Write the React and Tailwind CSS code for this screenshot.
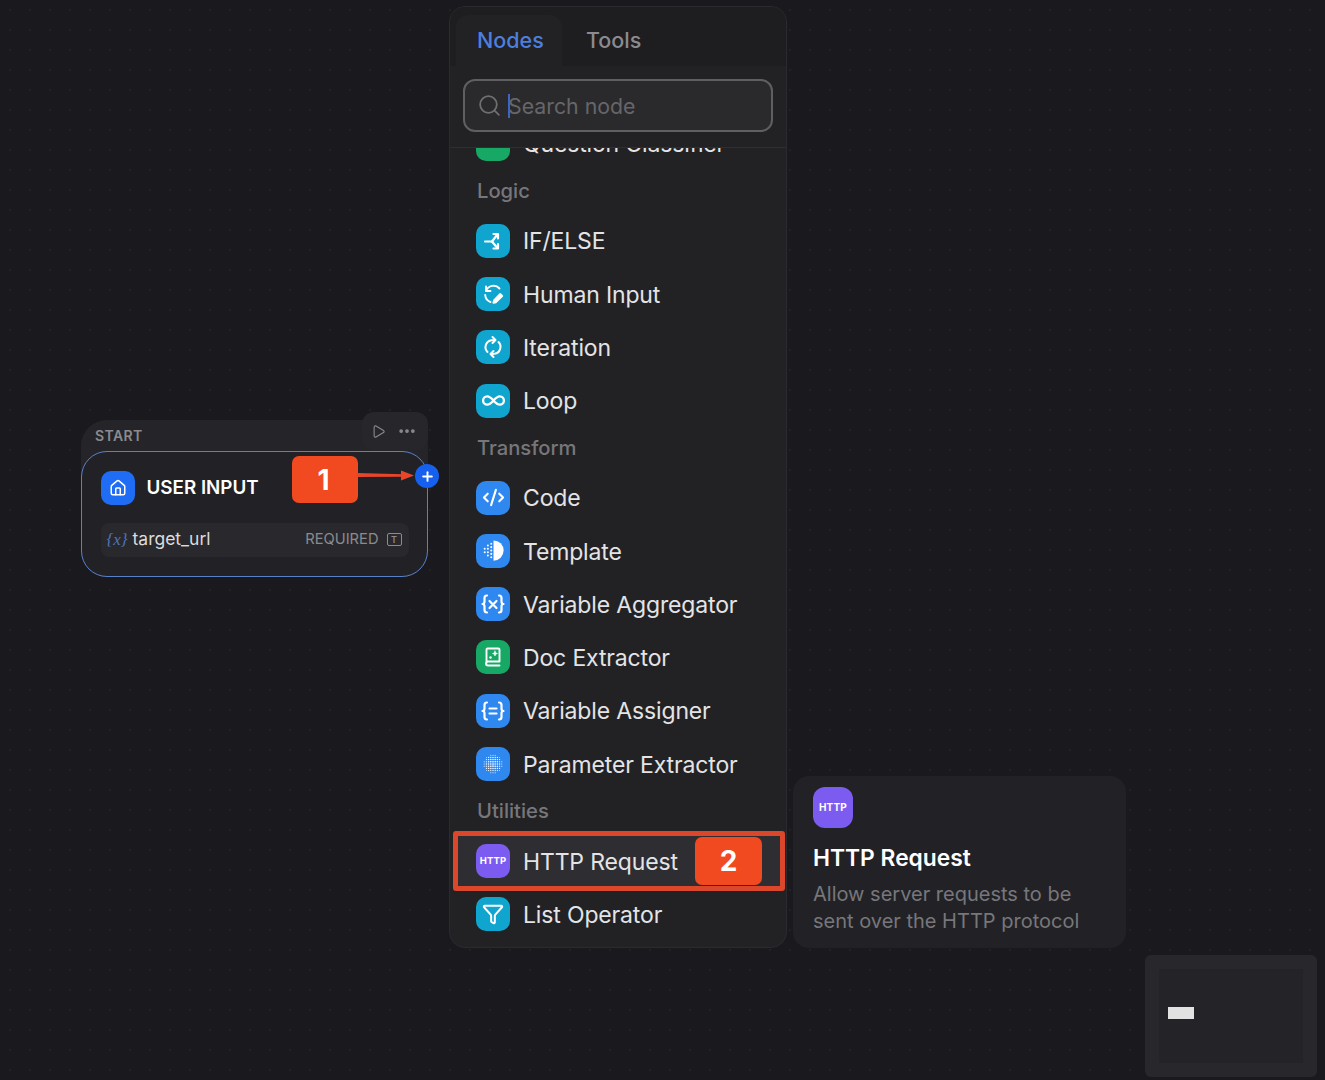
import React from 'react';
import { CodeXml, Ellipsis, Funnel, House, Infinity as InfinityIcon, Play, Plus, Search } from 'lucide-react';

const BLUE = 'bg-[#2f88f0]';
const CYAN = 'bg-[#0fa5cf]';
const GREEN = 'bg-[#17a865]';

function IfElseIcon() {
  return (
    <svg viewBox="0 0 24 24" className="w-6 h-6" fill="none" stroke="white" strokeWidth="2.2" strokeLinecap="round" strokeLinejoin="round">
      <path d="M4 12.5h7l5-6.5" />
      <path d="M11 12.5l5 6" />
      <path d="M12.5 5h4.5v4.5" />
      <path d="M17 15v4.5h-4.5" />
    </svg>
  );
}

function HumanIcon() {
  return (
    <svg viewBox="0 0 24 24" className="w-6 h-6" fill="none" stroke="white" strokeWidth="1.9" strokeLinecap="round" strokeLinejoin="round">
      <path d="M5 9a8 8 0 0 1 13.5-2.5" />
      <path d="M5 4.5V9h4.5" />
      <path d="M4.2 13a8 8 0 0 0 5.3 7" />
      <path d="M13 18.5l6.2-6.5 2 2-6.2 6.2-2.6.6z" fill="white" />
    </svg>
  );
}

function IterationIcon() {
  return (
    <svg viewBox="0 0 24 24" className="w-6 h-6" fill="none" stroke="white" strokeWidth="2" strokeLinecap="round" strokeLinejoin="round">
      <path d="M6.500 17a7 7 0 0 1 4-11.800L14 5" />
      <path d="M11.500 2l3 3-3 3" />
      <path d="M17.500 7a7 7 0 0 1-4 11.800L10 19" />
      <path d="M12.500 22l-3-3 3-3" />
    </svg>
  );
}

function TemplateIcon() {
  const dots = [
    [10, 6], [10, 9], [10, 12], [10, 15], [10, 18], [7, 7.500], [7, 10.500], [7, 13.500], [7, 16.500], [4.200, 10.500], [4.200, 13.500],
  ];
  return (
    <svg viewBox="0 0 24 24" className="w-[27px] h-[27px]" fill="white">
      <path d="M12 3a9 9 0 0 1 0 18z" />
      {dots.map(([x, y]) => (
        <circle key={`${x}-${y}`} cx={x} cy={y} r="0.9" />
      ))}
    </svg>
  );
}

function VariableIcon() {
  return (
    <svg viewBox="0 0 24 24" className="w-6 h-6" fill="none" stroke="white" strokeWidth="2.2" strokeLinecap="round" strokeLinejoin="round">
      <path d="M6 3.5c-2 0-2.5 1-2.5 2.5v3.5c0 1.5-.8 2.5-2 2.5 1.2 0 2 1 2 2.5V18c0 1.500.5 2.500 2.500 2.500" />
      <path d="M18 3.500c2 0 2.500 1 2.500 2.500v3.500c0 1.500.8 2.500 2 2.500-1.200 0-2 1-2 2.500V18c0 1.500-.5 2.500-2.500 2.500" />
      <path d="M8.500 9l7 7M15.500 9l-7 7" />
    </svg>
  );
}

function DocIcon() {
  return (
    <svg viewBox="0 0 24 24" className="w-6 h-6" fill="none" stroke="white" strokeWidth="1.9" strokeLinecap="round" strokeLinejoin="round">
      <path d="M5.500 18V4.500a1 1 0 0 1 1-1h11a1 1 0 0 1 1 1V16.500H7a1.800 1.800 0 0 0 0 4h11.500" />
      <path d="M14 6l.7 1.800 1.800.7-1.800.7L14 11l-.7-1.800-1.800-.7 1.800-.7z" fill="white" strokeWidth="0.6" />
      <circle cx="9.500" cy="12.500" r="1.200" fill="white" stroke="none" />
    </svg>
  );
}

function AssignerIcon() {
  return (
    <svg viewBox="0 0 24 24" className="w-6 h-6" fill="none" stroke="white" strokeWidth="2.2" strokeLinecap="round" strokeLinejoin="round">
      <path d="M6 3.500c-2 0-2.500 1-2.500 2.500v3.500c0 1.500-.8 2.500-2 2.500 1.200 0 2 1 2 2.500V18c0 1.500.5 2.500 2.500 2.500" />
      <path d="M18 3.500c2 0 2.500 1 2.500 2.500v3.500c0 1.500.8 2.500 2 2.500-1.200 0-2 1-2 2.500V18c0 1.500-.5 2.500-2.500 2.500" />
      <path d="M8.500 9.500h7M8.500 14.500h7" />
    </svg>
  );
}

function ParamIcon() {
  const dots = [];
  for (let x = -4; x <= 4; x++) {
    for (let y = -4; y <= 4; y++) {
      if (x * x + y * y <= 18) dots.push([12 + x * 2.200, 12 + y * 2.200, 0.85 - (x * x + y * y) / 50]);
    }
  }
  return (
    <svg viewBox="0 0 24 24" className="w-6 h-6" fill="white">
      {dots.map(([x, y, r]) => (
        <circle key={`${x}-${y}`} cx={x} cy={y} r={r} />
      ))}
    </svg>
  );
}

function QuestionIcon() {
  return (
    <svg viewBox="0 0 24 24" className="w-6 h-6" fill="white">
      <rect x="3" y="6" width="2" height="6" rx="1" />
      <rect x="7" y="6" width="2" height="6" rx="1" />
      <rect x="11" y="4" width="2" height="12" rx="1" />
      <path d="M15 5h3a3 3 0 0 1 0 9h-3z" fill="none" stroke="white" strokeWidth="2" />
    </svg>
  );
}

function HttpBadge({ box, text }) {
  return (
    <div className={`${box} rounded-[10px] bg-[#7c5cf0] flex items-center justify-center shrink-0`}>
      <span className={`${text} font-bold text-white tracking-[0.02em]`}>HTTP</span>
    </div>
  );
}

function NodeRow({ color, icon, label }) {
  return (
    <div className="h-[53.3px] flex items-center gap-[13px] pl-[26px]">
      <div className={`w-[34px] h-[34px] rounded-[10px] ${color} flex items-center justify-center shrink-0`}>{icon}</div>
      <span className="pt-[2px] text-[23px] tracking-[-0.15px] text-[#e4e4e6] whitespace-nowrap">{label}</span>
    </div>
  );
}

function GroupLabel({ children }) {
  return (
    <div className="h-[43.7px] pb-[2px] flex items-center pl-[27px] text-[20.200px] font-medium text-[#77777b]">{children}</div>
  );
}

function Marker({ n, className }) {
  return (
    <div className={`${className} bg-[#f24a20] rounded-[7px] flex items-center justify-center text-white text-[28px] font-bold`}>{n}</div>
  );
}

function StartNode() {
  return (
    <div className="absolute left-[81px] top-[412px] w-[360px]">
      <div className="w-[347px] mt-[8px] rounded-[26px] bg-[#252529]">
        <div className="h-[31px] pl-[14px] flex items-center text-[14px] font-semibold tracking-[0.03em] text-[#8b8b8f]">START</div>
        <div className="h-[126px] rounded-[26px] border-[1.5px] border-[#5a80c8] bg-[#222226] px-[18.5px] pt-[18.5px]">
          <div className="flex items-center gap-[12px]">
            <div className="w-[34px] h-[34px] rounded-[10px] bg-[#1f6cf5] flex items-center justify-center">
              <House size={18} color="white" strokeWidth={2} />
            </div>
            <span className="pt-[1px] text-[18.800px] font-semibold text-white">USER INPUT</span>
          </div>
          <div className="mt-[18px] h-[34px] w-[308px] rounded-[8px] bg-[#29292d] pl-[6px] pr-[7px] flex items-center">
            <span className="font-['Liberation_Serif',serif] italic text-[17px] text-[#4f74b8] w-[26px]">{'{x}'}</span>
            <span className="text-[17.500px] text-[#dcdcde]">target_url</span>
            <span className="ml-auto text-[14.700px] text-[#8b8b8f]">REQUIRED</span>
            <div className="ml-[8px] w-[15px] h-[13px] border border-[#8b8b8f] rounded-[2px] flex items-center justify-center text-[9px] font-semibold text-[#8b8b8f]">T</div>
          </div>
        </div>
      </div>
      <div className="absolute left-[281px] top-0 w-[66px] h-[38px] rounded-[12px] bg-[#27272b] flex items-center justify-center gap-[11px] pr-[2px] text-[#8b8b8f]">
        <Play size={15} strokeWidth={1.700} />
        <Ellipsis size={20} strokeWidth={2.500} />
      </div>
      <Marker n="1" className="absolute left-[211px] top-[44px] w-[66px] h-[47px] pr-[3px]" />
      <svg className="absolute left-[276px] top-[53px]" width="60" height="20" viewBox="0 0 60 20" fill="#e8452a">
        <path d="M0 8l46 1.200v2.600L0 12z" />
        <path d="M44 5.500l13 5-13 5z" />
      </svg>
      <div className="absolute left-[334px] top-[52px] w-[24px] h-[24px] rounded-full bg-[#1560ee] flex items-center justify-center">
        <Plus size={15} color="white" strokeWidth={3} />
      </div>
    </div>
  );
}

function NodePanel() {
  return (
    <div className="absolute left-[449px] top-[6px] w-[338px] h-[942px] rounded-[16px] border border-[#2b2b2f] bg-[#222225] flex flex-col overflow-hidden">
      <div className="h-[59px] pt-[8px] flex items-stretch bg-[#1e1e21]">
        <div className="w-[106px] ml-[6px] rounded-t-[12px] bg-[#222225] flex items-center pl-[21px] text-[21.500px] font-medium text-[#4d7fdf]">Nodes</div>
        <div className="pl-[24px] flex items-center text-[21.500px] font-medium text-[#8b8b8f]">Tools</div>
      </div>
      <div className="h-[82px] border-b border-[#2f2f33] px-[13px] pt-[13px]">
        <div className="h-[53px] rounded-[12px] border-2 border-[#5f5f62] bg-[#2a2a2d] flex items-center pl-[12px] gap-[6px]">
          <Search size={25} color="#6f6f72" strokeWidth={1.700} />
          <div className="w-[2px] h-[24px] bg-[#3d66c4] -mr-[8px] z-10" />
          <span className="pt-[2px] text-[21.300px] text-[#66666a]">Search node</span>
        </div>
      </div>
      <div className="flex-1 overflow-hidden">
        <div className="-mt-[31px]">
          <NodeRow color={GREEN} icon={<QuestionIcon />} label="Question Classifier" />
          <GroupLabel>Logic</GroupLabel>
          <NodeRow color={CYAN} icon={<IfElseIcon />} label="IF/ELSE" />
          <NodeRow color={CYAN} icon={<HumanIcon />} label="Human Input" />
          <NodeRow color={CYAN} icon={<IterationIcon />} label="Iteration" />
          <NodeRow color={CYAN} icon={<InfinityIcon size={25} color="white" strokeWidth={2.200} />} label="Loop" />
          <GroupLabel>Transform</GroupLabel>
          <NodeRow color={BLUE} icon={<CodeXml size={23} color="white" strokeWidth={2.200} />} label="Code" />
          <NodeRow color={BLUE} icon={<TemplateIcon />} label="Template" />
          <NodeRow color={BLUE} icon={<VariableIcon />} label="Variable Aggregator" />
          <NodeRow color={GREEN} icon={<DocIcon />} label="Doc Extractor" />
          <NodeRow color={BLUE} icon={<AssignerIcon />} label="Variable Assigner" />
          <NodeRow color={BLUE} icon={<ParamIcon />} label="Parameter Extractor" />
          <GroupLabel>Utilities</GroupLabel>
          <div className="relative h-[53.3px] flex items-center pl-[26px]">
            <div className="absolute left-[3px] right-[1px] top-[-3px] h-[60px] border-[5px] border-[#db472b] rounded-[3px] bg-[#2d2d32]" />
            <div className="relative flex items-center gap-[13px]">
              <HttpBadge box="w-[34px] h-[34px]" text="text-[9.500px]" />
              <span className="pt-[2px] text-[23px] tracking-[-0.15px] text-[#e4e4e6] whitespace-nowrap">HTTP Request</span>
            </div>
            <Marker n="2" className="absolute left-[245px] top-[3px] w-[67px] h-[48px]" />
          </div>
          <NodeRow color={CYAN} icon={<Funnel size={22} color="white" strokeWidth={2.200} />} label="List Operator" />
        </div>
      </div>
    </div>
  );
}

function NodeTooltip() {
  return (
    <div className="absolute left-[793px] top-[776px] w-[333px] h-[172px] rounded-[16px] bg-[#222226] pl-[20px] pt-[11px]">
      <HttpBadge box="w-[40px] h-[41px] rounded-[12px]" text="text-[10px]" />
      <div className="mt-[15px] text-[22.800px] leading-[30px] font-semibold text-white">HTTP Request</div>
      <div className="mt-[8px] text-[20px] leading-[26.500px] text-[#77777b]">
        Allow server requests to be
        <br />
        sent over the HTTP protocol
      </div>
    </div>
  );
}

function Minimap() {
  return (
    <div className="absolute left-[1145px] top-[955px] w-[172px] h-[122px] rounded-[6px] bg-[#28282c] p-[14px]">
      <div className="w-full h-full bg-[#242428] pl-[9px] pt-[38px]">
        <div className="w-[26px] h-[12px] bg-[#e2e2e2]" />
      </div>
    </div>
  );
}

export default function App() {
  return (
    <div className="relative w-[1325px] h-[1080px] overflow-hidden bg-[#1a1a1e] bg-[radial-gradient(#232327_1px,transparent_1.200px)] bg-[length:20px_20px] font-['Inter',sans-serif]">
      <StartNode />
      <NodePanel />
      <NodeTooltip />
      <Minimap />
    </div>
  );
}
